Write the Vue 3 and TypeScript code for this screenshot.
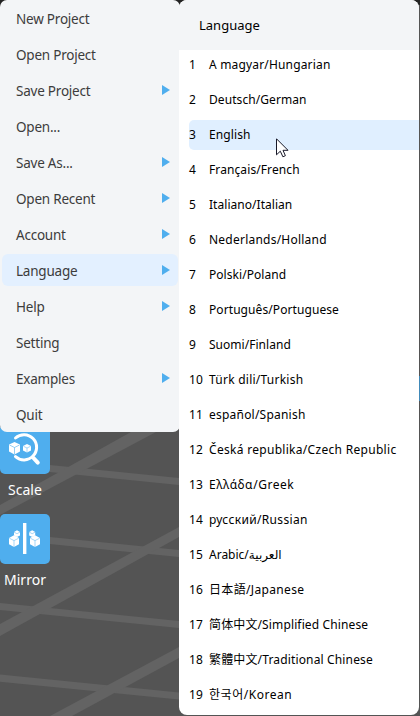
<script setup lang="ts">
interface MenuItem {
  label: string
  sub?: boolean
  active?: boolean
}

interface Language {
  name: string
  tracking: number
}

const menu: MenuItem[] = [
  { label: 'New Project' },
  { label: 'Open Project' },
  { label: 'Save Project', sub: true },
  { label: 'Open...' },
  { label: 'Save As...', sub: true },
  { label: 'Open Recent', sub: true },
  { label: 'Account', sub: true },
  { label: 'Language', sub: true, active: true },
  { label: 'Help', sub: true },
  { label: 'Setting' },
  { label: 'Examples', sub: true },
  { label: 'Quit' },
]

// tracking: letter spacing in px
const languages: Language[] = [
  { name: 'A magyar/Hungarian', tracking: 0.17 },
  { name: 'Deutsch/German', tracking: 0.08 },
  { name: 'English', tracking: 0.1 },
  { name: 'Français/French', tracking: 0.1 },
  { name: 'Italiano/Italian', tracking: 0.04 },
  { name: 'Nederlands/Holland', tracking: 0.23 },
  { name: 'Polski/Poland', tracking: 0.05 },
  { name: 'Português/Portuguese', tracking: 0.08 },
  { name: 'Suomi/Finland', tracking: 0.03 },
  { name: 'Türk dili/Turkish', tracking: 0.24 },
  { name: 'español/Spanish', tracking: 0.22 },
  { name: 'Česká republika/Czech Republic', tracking: 0.3 },
  { name: 'Ελλάδα/Greek', tracking: 0.54 },
  { name: 'русский/Russian', tracking: 0.33 },
  { name: 'Arabic/العربية', tracking: 0 },
  { name: '日本語/Japanese', tracking: 0.34 },
  { name: '简体中文/Simplified Chinese', tracking: 0.13 },
  { name: '繁體中文/Traditional Chinese', tracking: 0.15 },
  { name: '한국어/Korean', tracking: 0.54 },
]
const selected = 2
</script>

<template>
  <div class="app">
    <svg class="floor" width="420" height="716" viewBox="0 0 420 716">
      <rect width="420" height="5" fill="#232323" />
      <g fill="#636363">
        <path d="M0 460 179 478V485L0 467Z" />
        <path d="M0 532 179 550V557L0 539Z" />
        <path d="M0 603 179 621V628L0 610Z" />
        <path d="M0 674.5 179 692.5V699.5L0 681.7Z" />
        <path d="M0 505 131 432H156L0 515Z" />
        <path d="M0 624 179 527V537L0 636Z" />
        <path d="M50 716 179 647V658L72 716Z" />
      </g>
      <rect x="419" y="376" width="1" height="25" fill="#4089b8" />
    </svg>

    <div class="left">
      <nav class="menu">
        <div v-for="m in menu" :key="m.label" class="item" :class="{ active: m.active }">
          <span>{{ m.label }}</span>
          <svg v-if="m.sub" width="8" height="10" viewBox="0 0 8 10"><path d="M0 0 8 5 0 10Z" fill="#4faeee" /></svg>
        </div>
      </nav>
      <div class="tool scale">
        <svg class="tile" width="50" height="50" viewBox="0 0 50 50">
          <path d="M15.5 14A12.6 12.6 0 1 1 15.5 32.6" fill="none" stroke="#fff" stroke-width="3" stroke-linecap="round" />
          <path d="M33.5 34 37.8 38.6" stroke="#fff" stroke-width="4" stroke-linecap="round" />
          <path d="M9 20.5 14.5 18 20 20.5V27.5L14.5 30.5 9 27.5Z" fill="#fff" />
          <path d="M9.5 21 14.5 23.5 19.5 21M14.5 23.5V30" fill="none" stroke="#4faeee" stroke-width=".6" />
          <path d="M23 22 27 20 31 22V26.5L27 28.5 23 26.5Z" fill="#fff" />
          <path d="M23.5 22.3 27 24 30.5 22.3M27 24V28" fill="none" stroke="#4faeee" stroke-width=".5" />
        </svg>
        <span>Scale</span>
      </div>
      <div class="tool mirror">
        <svg class="tile" width="50" height="50" viewBox="0 0 50 50">
          <rect x="23" y="9" width="3.4" height="31" fill="#fff" />
          <g fill="#fff">
            <path d="M14 18 17 16.3 20 18V21.4L17 23 14 21.4Z" />
            <path d="M9 24 14 21.3 19 24V30.3L14 33 9 30.3Z" />
            <path d="M29.2 18 32.2 16.3 35.2 18V21.4L32.2 23 29.2 21.4Z" />
            <path d="M30 24 35 21.3 40 24V30.3L35 33 30 30.3Z" />
          </g>
          <g fill="none" stroke="#4faeee" stroke-width=".5">
            <path d="M14 18.1 17 19.7 20 18.1M9.3 24.2 14 26.6 18.7 24.2M14 26.6V33" />
            <path d="M29.2 18.1 32.2 19.7 35.2 18.1M30.3 24.2 35 26.6 39.7 24.2M35 26.6V33" />
          </g>
        </svg>
        <span>Mirror</span>
      </div>
    </div>

    <section class="panel">
      <header>Language</header>
      <ul>
        <li v-for="(l, i) in languages" :key="l.name" :class="{ hover: i === selected }">
          <span class="num">{{ i + 1 }}</span>
          <span :style="{ letterSpacing: l.tracking ? l.tracking + 'px' : 'normal' }">{{ l.name }}</span>
        </li>
      </ul>
    </section>

    <svg class="cursor" width="13" height="20" viewBox="0 0 13 20">
      <path d="M.5 .8V16.8L4.3 13.2 6.9 18.8 9.4 17.7 7 12.3H12Z" fill="#fff" stroke="#181828" stroke-width="1" />
    </svg>
  </div>
</template>

<style>
body {
  margin: 0;
}
</style>

<style scoped>
.app {
  position: relative;
  display: flex;
  width: 420px;
  height: 716px;
  overflow: hidden;
  background: #545454;
  font-family: 'Noto Sans', 'Noto Sans CJK SC', 'DejaVu Sans', sans-serif;
}
.floor {
  position: absolute;
  inset: 0;
}
.left {
  position: relative;
  width: 179px;
  flex: none;
}
.menu {
  position: relative;
  z-index: 1;
  box-sizing: border-box;
  width: 180px;
  height: 432px;
  padding: 2px;
  display: flex;
  flex-direction: column;
  gap: 4px;
  background: #f3f5f7;
  border-radius: 7px;
}
.item {
  display: flex;
  align-items: center;
  justify-content: space-between;
  height: 32px;
  padding: 0 8px 0 14px;
  border-radius: 6px;
  color: #3c3c3c;
  font-size: 13.5px;
  letter-spacing: -0.22px;
}
.item span {
  padding-top: 2px;
  line-height: 30px;
}
.item span {
  padding-top: 2px;
  line-height: 32px;
  height: 32px;
}
.active {
  background: #e3f0ff;
}
.tool {
  display: flex;
  flex-direction: column;
  width: 50px;
  color: #fff;
  font-size: 14px;
  line-height: 20px;
  text-align: center;
}
.scale {
  margin-top: -8px;
}
.mirror {
  margin-top: 14px;
}
.tool span {
  margin-top: 6px;
}
.tile {
  border-radius: 5px;
  background: #4faeee;
}
.panel {
  position: relative;
  z-index: 2;
  width: 240px;
  height: 715px;
  overflow: hidden;
  border-radius: 8px;
  background: #fff;
  color: #000;
  font-size: 12px;
}
header {
  height: 50px;
  padding-left: 20px;
  background: #f3f5f7;
  font-size: 13px;
  line-height: 50px;
}
ul {
  display: flex;
  flex-direction: column;
  gap: 5px;
  margin: 0;
  padding: 0 0 0 10px;
  list-style: none;
}
li {
  display: flex;
  height: 30px;
  line-height: 30px;
  border-radius: 5px 0 0 5px;
  white-space: nowrap;
}
.hover {
  background: #e0efff;
}
.num {
  width: 20px;
  flex: none;
  letter-spacing: 0.2px;
}
.cursor {
  position: absolute;
  z-index: 3;
  left: 276px;
  top: 138px;
}
</style>
